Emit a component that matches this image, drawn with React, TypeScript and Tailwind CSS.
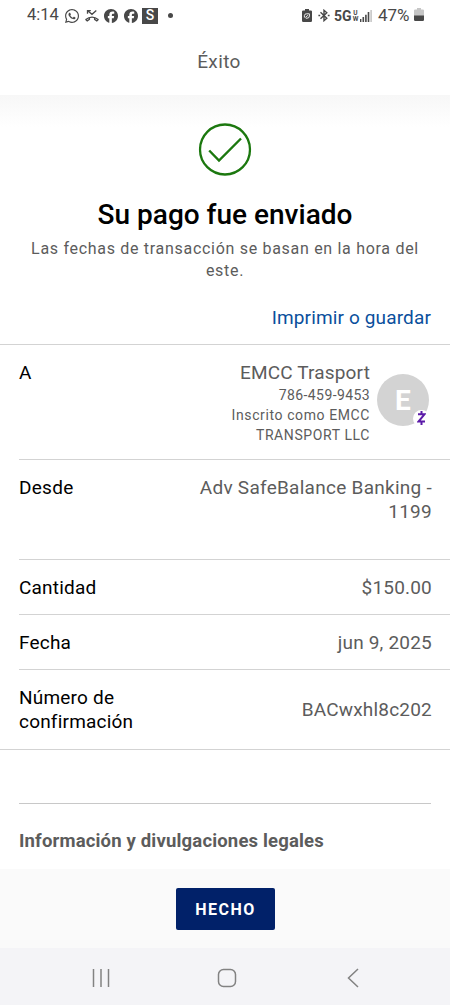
import React from 'react';
import { FaWhatsapp } from 'react-icons/fa';
import { FaFacebook } from 'react-icons/fa6';

type RowProps = {
    label: string;
    value: string;
    className: string;
};

const Row = ({ label, value, className }: RowProps) => (
    <div className={`ml-[19px] flex justify-between border-[#d3d3d3] pr-[18px] ${className}`}>
        <span className="w-[135px] text-black">{label}</span>
        <span className="w-[250px] text-right">{value}</span>
    </div>
);

const StatusBar = () => (
    <div className="flex h-[31px] items-center justify-between pr-[26px] pl-[27px] tracking-normal text-[#484848]">
        <div className="flex items-center">
            <span className="w-[37px] text-[16.5px] leading-none">4:14</span>
            <FaWhatsapp className="size-4" />
            <svg className="ml-[4px] size-4" viewBox="0 0 16 16" fill="none" stroke="currentColor">
                <path d="M12.3 2.5 8 6.3 3.7 2.8M3.5 5.7V2.6h3.3" strokeWidth="1.3" />
                <path d="M2 11.5C5.5 8.3 10.5 8.3 14 11.5" strokeWidth="1.4" />
                <path d="m1.5 11.3 1.7 1.7 2.2-1.6V9.9M14.5 11.3 12.8 13l-2.2-1.6V9.9" strokeWidth="1.3" />
            </svg>
            <FaFacebook className="ml-[4px] size-[14px]" />
            <FaFacebook className="ml-[6px] size-[14px]" />
            <span className="ml-[4px] flex size-4 items-center justify-center bg-[#484848] text-[14px] font-medium text-white">S</span>
            <span className="ml-[10px] size-[5px] rounded-full bg-[#484848]" />
        </div>
        <div className="flex items-center">
            <svg className="h-[13px] w-[10px]" viewBox="0 0 10 13">
                <path d="M3 0h4v1.4h1.8Q10 1.4 10 2.6v9.2Q10 13 8.8 13H1.2Q0 13 0 11.8V2.6Q0 1.4 1.2 1.4H3z" fill="currentColor" />
                <path d="M2.4 8.5V6.5Q2.6 4.8 4.5 4.8H7.4V7Q7.3 9.2 5 9.2H3.8M3.3 8.5 5.8 6.3" fill="none" stroke="white" strokeWidth="0.9" />
            </svg>
            <svg className="ml-[6px] h-[13px] w-[12px]" viewBox="0 0 12 13" fill="none" stroke="currentColor" strokeWidth="1.4">
                <path d="m2.5 3.3 6.3 6L6 11.7V1.3l2.8 2.4-6.3 6" />
                <path d="M.4 6.5h1.8M9.8 6.5h1.8" strokeWidth="1.7" />
            </svg>
            <span className="ml-[4px] w-[18px] text-[14px] leading-none font-bold">5G</span>
            <span className="flex w-[7px] flex-col items-center text-[6.5px] leading-[6px] font-bold">
                <span>U</span>
                <span>W</span>
            </span>
            <svg className="ml-px h-[12px] w-[12px]" viewBox="0 0 12 12" fill="currentColor">
                <path d="M0 9h1.4v3H0zM2.5 7h1.6v5H2.5zM5.1 4.8h1.6V12H5.1zM7.7 2h1.6v10H7.7z" />
                <path d="M10.3 0h1.6v12h-1.6z" fill="#c6c6c6" />
            </svg>
            <span className="ml-[6px] w-[36px] text-[17px] leading-none">47%</span>
            <svg className="mb-[2px] h-[13px] w-[10px]" viewBox="0 0 10 13">
                <path d="M3 0h4v1.4h1.8Q10 1.4 10 2.6V8H0V2.6Q0 1.4 1.2 1.4H3z" fill="#c6c6c6" />
                <path d="M0 7.5h10v4.3Q10 13 8.8 13H1.2Q0 13 0 11.8z" fill="currentColor" />
            </svg>
        </div>
    </div>
);

const App = () => {
    return (
        <div className="flex h-[1005px] w-[450px] flex-col overflow-hidden bg-white font-['Roboto',sans-serif] text-[19px] leading-[24.5px] tracking-[0.2px] text-[#5c5c5c]">
            <StatusBar />
            <header className="flex h-[64px] items-start justify-center pt-[19px] pr-3">
                <h1 className="tracking-[0.4px]">Éxito</h1>
            </header>

            <main className="flex h-[774px] flex-col bg-linear-to-b from-[#f7f7f7] to-white to-[32px]">
                <svg className="mx-auto mt-[28px] size-[53px] shrink-0 -translate-x-[0.5px]" viewBox="0 0 53 53" fill="none" stroke="#1c780f">
                    <circle cx="26.5" cy="26.5" r="25" strokeWidth="2.3" />
                    <path d="m10.7 27.5 9.8 10 22-22" strokeWidth="2.4" />
                </svg>
                <h2 className="mt-[21px] text-center text-[28px] leading-9 font-medium tracking-normal text-black">Su pago fue enviado</h2>
                <p className="mt-[5px] px-6 text-center text-[16px] leading-[22px] tracking-[0.7px]">
                    Las fechas de transacción se basan en la hora del este.
                </p>
                <a className="mt-[24px] mr-[19px] self-end tracking-[0.14px] text-[#0a4f9c]" href="#">Imprimir o guardar</a>

                <section className="mt-[13px] border-y border-[#d3d3d3]">
                    <div className="ml-[19px] flex h-[115px] justify-between border-b border-[#d3d3d3] pt-[15px] pr-[21px]">
                        <span className="pt-px text-black">A</span>
                        <div className="flex">
                            <div className="w-[160px] text-right text-[14px] leading-[19.5px] tracking-[0.6px]">
                                <p className="text-[19px] leading-[25px] tracking-[0.15px]">EMCC Trasport</p>
                                <p className="mt-px tracking-[0.4px]">786-459-9453</p>
                                <p className="mt-px">Inscrito como EMCC TRANSPORT LLC</p>
                            </div>
                            <div className="relative mt-[14px] ml-[7px] flex size-[52px] items-center justify-center rounded-full bg-[#d3d3d3] pt-[3px] text-[28px] font-bold text-white">
                                E
                                <span className="absolute right-[-1px] bottom-[-1px] flex size-[17px] items-center justify-center rounded-full bg-white">
                                    <svg className="h-[14px] w-[9px]" viewBox="0 0 9 14" fill="none" stroke="#5b1aa8" strokeWidth="2">
                                        <path d="M1 3.3h6.5L1.5 10.5H8M4.5 0v3M4.5 11v3" />
                                    </svg>
                                </span>
                            </div>
                        </div>
                    </div>
                    <Row label="Desde" value="Adv SafeBalance Banking - 1199" className="h-[100px] border-b pt-[16px] tracking-[0.27px]" />
                    <Row label="Cantidad" value="$150.00" className="h-[55px] items-center border-b pt-[3px]" />
                    <Row label="Fecha" value="jun 9, 2025" className="h-[55px] items-center border-b pt-[3px]" />
                    <Row label="Número de confirmación" value="BACwxhl8c202" className="h-[79px] items-center pt-[2px]" />
                </section>

                <h3 className="mx-[19px] mt-[53px] border-t border-[#c8c8c8] pt-[25px] text-[18.5px] font-bold tracking-[0.17px]">
                    Información y divulgaciones legales
                </h3>
            </main>

            <footer className="flex h-[79px] items-center justify-center bg-[#fafafa]">
                <button className="h-[42px] w-[99px] rounded-[2px] bg-[#012169] pt-[3px] pl-[1px] text-[16px] font-bold tracking-[1.5px] text-white">HECHO</button>
            </footer>
            <nav className="flex h-[57px] items-center bg-[#f4f4f7] pt-[3px] pl-[92px]">
                <svg className="h-[20px] w-[270px]" viewBox="0 0 270 20" fill="none" stroke="#828282" strokeWidth="1.5">
                    <path d="M1.5 1v18M9 1v18M16.5 1v18" />
                    <rect x="126.5" y="1.5" width="17" height="17" rx="5" />
                    <path d="m266 1-9.5 9 9.5 9" />
                </svg>
            </nav>
        </div>
    );
};

export default App;
